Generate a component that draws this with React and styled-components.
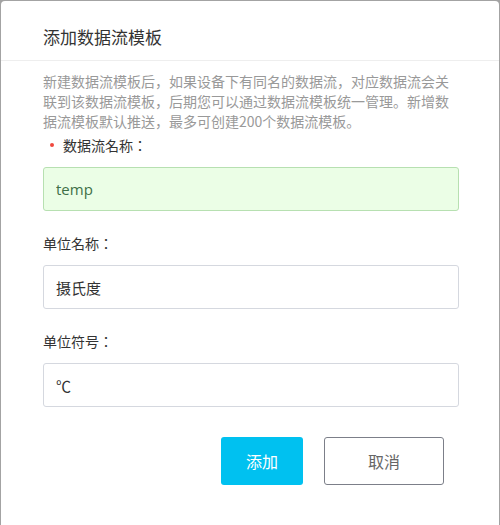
import React from 'react'
import styled, { createGlobalStyle } from 'styled-components'

const GlobalStyle = createGlobalStyle`
  html, body {
    margin: 0;
    padding: 0;
    background: #a3a3a3;
    overflow: hidden;
  }
  body {
    font-family: 'Noto Sans CJK SC', 'Open Sans', sans-serif;
  }
`

const fields = [
  { label: '数据流名称：', value: 'temp', required: true, valid: true },
  { label: '单位名称：', value: '摄氏度' },
  { label: '单位符号：', value: '℃' },
]

const App = () => {
  return (
    <>
      <GlobalStyle />
      <Modal>
        <Header>
          <Title>添加数据流模板</Title>
        </Header>
        <Body>
          <Intro>
            新建数据流模板后，如果设备下有同名的数据流，对应数据流会关联到该数据流模板，后期您可以通过数据流模板统一管理。新增数据流模板默认推送，最多可创建200个数据流模板。
          </Intro>
          {fields.map((f, i) => (
            <Field key={f.label} first={i === 0}>
              <Label required={f.required}>{f.label}</Label>
              <Input valid={f.valid} defaultValue={f.value} />
            </Field>
          ))}
          <Footer>
            <PrimaryButton>添加</PrimaryButton>
            <GhostButton>取消</GhostButton>
          </Footer>
        </Body>
      </Modal>
    </>
  )
}

export default App

const Modal = styled.div`
  margin: 1px 0 0 1px;
  width: 498px;
  min-height: 560px;
  background: #fff;
  border-radius: 4px 4px 0 0;
`

const Header = styled.div`
  height: 60px;
  box-sizing: border-box;
  padding: 24px 42px 12px;
  border-bottom: 1px solid #eeeeee;
`

const Title = styled.h3`
  margin: 0;
  font-size: 17px;
  line-height: 24px;
  font-weight: 400;
  color: #333;
`

const Body = styled.div`
  padding: 10px 40px 0 42px;
`

const Intro = styled.p`
  margin: 0;
  font-size: 14px;
  line-height: 20px;
  color: #999;
`

const Field = styled.div`
  display: flex;
  flex-direction: column;
  gap: 12px;
  margin-top: ${({ first }) => (first ? '4px' : '22px')};
`

const Label = styled.label`
  position: relative;
  font-family: 'Noto Sans CJK JP', 'Noto Sans CJK SC', sans-serif;
  font-size: 14px;
  line-height: 20px;
  color: #333;
  padding-left: ${({ required }) => (required ? '20px' : '0')};

  &::before {
    content: '';
    display: ${({ required }) => (required ? 'block' : 'none')};
    position: absolute;
    left: 7px;
    top: 8px;
    width: 4px;
    height: 4px;
    border-radius: 50%;
    background: #f0483e;
  }
`

const Input = styled.input`
  box-sizing: border-box;
  width: 416px;
  height: 44px;
  padding: 0 12px;
  border-radius: 3px;
  outline: none;
  font-family: 'Open Sans', 'Noto Sans CJK SC', sans-serif;
  font-size: 15px;
  border: 1px solid ${({ valid }) => (valid ? '#b7e0b1' : '#d5d8df')};
  background: ${({ valid }) => (valid ? '#ebfee6' : '#fff')};
  color: ${({ valid }) => (valid ? '#3f7048' : '#333')};
`

const Footer = styled.div`
  display: flex;
  justify-content: flex-end;
  gap: 21px;
  margin-top: 30px;
  padding-right: 15px;
`

const PrimaryButton = styled.button`
  width: 82px;
  height: 48px;
  border: none;
  border-radius: 3px;
  background: #00c1f0;
  color: #fff;
  font-family: 'Noto Sans CJK SC', sans-serif;
  font-size: 16px;
  cursor: pointer;
`

const GhostButton = styled.button`
  width: 120px;
  height: 48px;
  border: 1px solid #7c7f89;
  border-radius: 3px;
  background: #fff;
  color: #666;
  font-family: 'Noto Sans CJK SC', sans-serif;
  font-size: 16px;
  cursor: pointer;
`
